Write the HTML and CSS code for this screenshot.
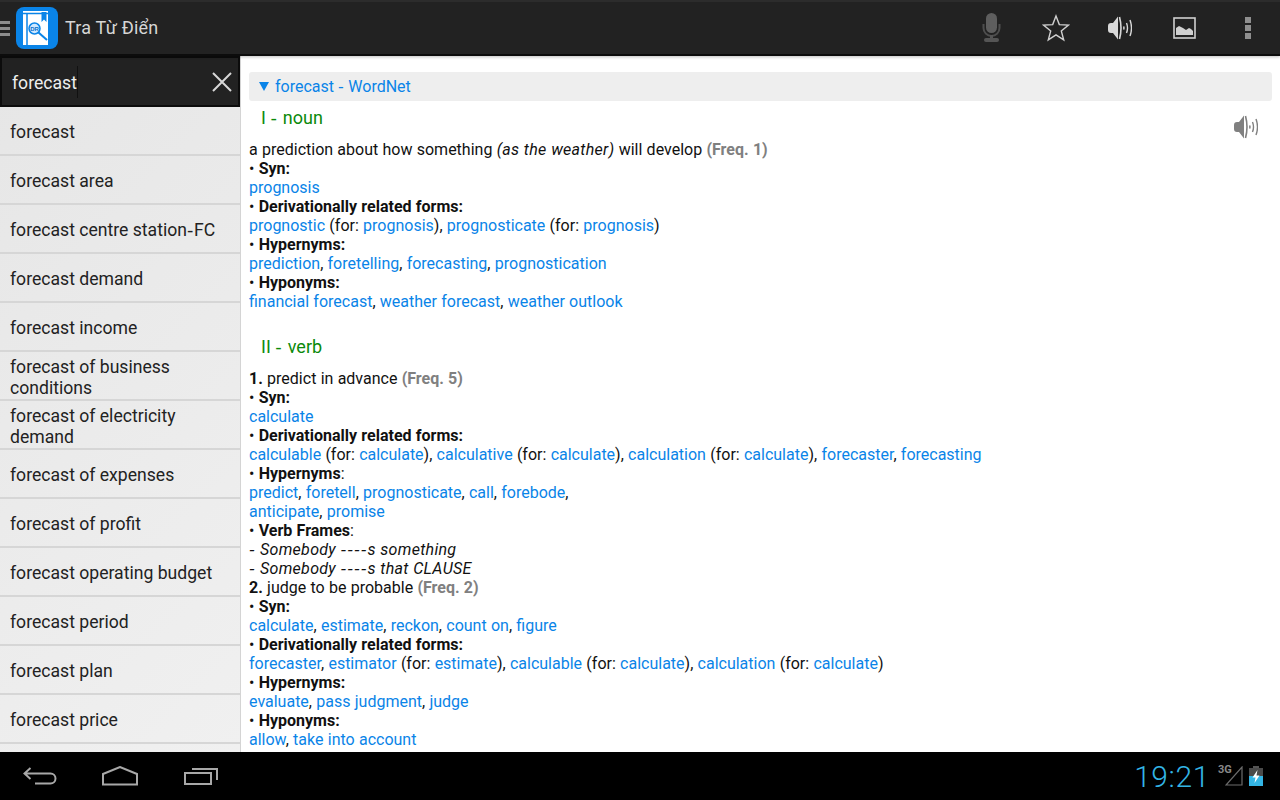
FILE: index.html
```html
<!DOCTYPE html>
<html lang="vi">
<head>
<meta charset="utf-8">
<title>Tra Từ Điển</title>
<link rel="stylesheet" href="styles.css">
</head>
<body>
<div class="app">
  <header class="actionbar">
    <div class="home">
      <div class="drawer"><i></i><i></i><i></i></div>
      <svg class="logo" width="42" height="42" viewBox="0 0 42 42">
        <rect x="0" y="0" width="42" height="42" rx="8" fill="#0a84e8"/>
        <path d="M7 4h25v34H7z" fill="#fff"/>
        <path d="M7 6.500h25M11 7v31" stroke="#0a84e8" stroke-width="1.500" fill="none"/>
        <path d="M25.500 5h5v10l-2.500-2.500-2.500 2.500z" fill="#0a84e8"/>
        <circle cx="18.500" cy="21.500" r="5.500" fill="#cfe8ff" stroke="#0a84e8" stroke-width="1.500"/>
        <text class="logo-mark" x="18.500" y="23.500">DR</text>
        <path d="M22.500 25.500l8.500 7.500" stroke="#0a84e8" stroke-width="2"/>
      </svg>
      <span class="title">Tra Từ Điển</span>
    </div>
    <div class="actions">
      <svg class="act" width="24" height="32" viewBox="0 0 24 32">
        <rect x="7" y="1" width="11" height="20" rx="5.500" fill="#5e5e5e"/>
        <path d="M4.500 12v4a8 8 0 0 0 16 0v-4" fill="none" stroke="#4e4e4e" stroke-width="2"/>
        <rect x="11" y="23" width="3" height="4" fill="#555"/>
        <rect x="5" y="26" width="15" height="4" rx="2" fill="#555"/>
      </svg>
      <svg class="act" width="28" height="28" viewBox="0 0 28 28">
        <path d="M14 2l3.300 8.600 9.200.5-7.200 5.800 2.400 8.900L14 20.800 6.300 25.800l2.400-8.900L1.500 11.100l9.200-.5z" fill="none" stroke="#d0d0d0" stroke-width="1.400"/>
      </svg>
      <svg class="act" width="24" height="24" viewBox="0 0 24 24">
        <use href="#speaker" fill="#d8d8d8" stroke="#d8d8d8"/>
      </svg>
      <svg class="act" width="24" height="24" viewBox="0 0 24 24">
        <rect x="1" y="2" width="21" height="20" fill="none" stroke="#d0d0d0" stroke-width="1.600"/>
        <path d="M3 19v-7l3-2 4 2 3 2 3-2 2 1 2 2v4z" fill="#d0d0d0"/>
      </svg>
      <div class="overflow"><i></i><i></i><i></i></div>
    </div>
  </header>
  <main class="main">
    <aside class="sidebar">
      <div class="search">
        <span class="query">forecast</span>
        <svg width="20" height="20" viewBox="0 0 20 20"><path d="M1 1l18 18M19 1L1 19" stroke="#d8d8d8" stroke-width="2"/></svg>
      </div>
      <ul class="list">
        <li><span>forecast</span></li>
        <li><span>forecast area</span></li>
        <li><span>forecast centre station<span class="dash-list">-</span>FC</span></li>
        <li><span>forecast demand</span></li>
        <li><span>forecast income</span></li>
        <li><span>forecast of business conditions</span></li>
        <li><span>forecast of electricity demand</span></li>
        <li><span>forecast of expenses</span></li>
        <li><span>forecast of profit</span></li>
        <li><span>forecast operating budget</span></li>
        <li><span>forecast period</span></li>
        <li><span>forecast plan</span></li>
        <li><span>forecast price</span></li>
      </ul>
    </aside>
    <article class="content">
      <div class="dict-head"><span class="tri"></span><span>forecast <span class="dash-head">-</span> WordNet</span></div>
      <div class="pos first">I <span class="dash-pos">-</span> noun
        <svg class="say" width="24" height="24" viewBox="0 0 24 24"><use href="#speaker" fill="#808080" stroke="#808080"/></svg>
      </div>
      <div class="body">
        <p>a prediction about how something <em>(as the weather)</em> will develop <b class="freq">(Freq. 1)</b></p>
        <p>• <b>Syn:</b></p>
        <p><a>prognosis</a></p>
        <p>• <b>Derivationally related forms:</b></p>
        <p><a>prognostic</a> (for: <a>prognosis</a>), <a>prognosticate</a> (for: <a>prognosis</a>)</p>
        <p>• <b>Hypernyms:</b></p>
        <p><a>prediction</a>, <a>foretelling</a>, <a>forecasting</a>, <a>prognostication</a></p>
        <p>• <b>Hyponyms:</b></p>
        <p><a>financial forecast</a>, <a>weather forecast</a>, <a>weather outlook</a></p>
      </div>
      <div class="pos second">II <span class="dash-pos">-</span> verb</div>
      <div class="body">
        <p><b>1.</b> predict in advance <b class="freq">(Freq. 5)</b></p>
        <p>• <b>Syn:</b></p>
        <p><a>calculate</a></p>
        <p>• <b>Derivationally related forms:</b></p>
        <p><a>calculable</a> (for: <a>calculate</a>), <a>calculative</a> (for: <a>calculate</a>), <a>calculation</a> (for: <a>calculate</a>), <a>forecaster</a>, <a>forecasting</a></p>
        <p>• <b>Hypernyms</b>:</p>
        <p><a>predict</a>, <a>foretell</a>, <a>prognosticate</a>, <a>call</a>, <a>forebode</a>,</p>
        <p><a>anticipate</a>, <a>promise</a></p>
        <p>• <b>Verb Frames</b>:</p>
        <p><span class="dash">-</span> <em>Somebody <span class="dash">----</span>s something</em></p>
        <p><span class="dash">-</span> <em>Somebody <span class="dash">----</span>s that CLAUSE</em></p>
        <p><b>2.</b> judge to be probable <b class="freq">(Freq. 2)</b></p>
        <p>• <b>Syn:</b></p>
        <p><a>calculate</a>, <a>estimate</a>, <a>reckon</a>, <a>count on</a>, <a>figure</a></p>
        <p>• <b>Derivationally related forms:</b></p>
        <p><a>forecaster</a>, <a>estimator</a> (for: <a>estimate</a>), <a>calculable</a> (for: <a>calculate</a>), <a>calculation</a> (for: <a>calculate</a>)</p>
        <p>• <b>Hypernyms:</b></p>
        <p><a>evaluate</a>, <a>pass judgment</a>, <a>judge</a></p>
        <p>• <b>Hyponyms:</b></p>
        <p><a>allow</a>, <a>take into account</a></p>
        <p>• <b>Verb Frames</b>:</p>
      </div>
    </article>
  </main>
  <footer class="navbar">
    <div class="softkeys">
      <svg width="34" height="20" viewBox="0 0 34 20"><path d="M7.500 2L1.500 7.500 7.500 13M2.500 7.500h25a5 5 0 0 1 0 10H12" fill="none" stroke="#a8a8a8" stroke-width="2"/></svg>
      <svg width="36" height="20" viewBox="0 0 36 20"><path d="M1 8L18 1l17 7v10.500H1z" fill="none" stroke="#a8a8a8" stroke-width="2"/></svg>
      <svg width="35" height="20" viewBox="0 0 35 20"><rect x="2" y="7" width="26" height="11" fill="none" stroke="#a8a8a8" stroke-width="2"/><path d="M9 3h25v11" fill="none" stroke="#a8a8a8" stroke-width="2"/></svg>
    </div>
    <div class="status">
      <span class="clock">19:21</span>
      <div class="signal">
        <span class="net">3G</span>
        <svg width="18" height="20" viewBox="0 0 18 20"><path d="M17 1v18H1z" fill="none" stroke="#6c6c6c" stroke-width="1.200"/></svg>
      </div>
      <svg class="battery" width="14" height="20" viewBox="0 0 14 20">
        <rect x="4" y="0" width="6" height="2" fill="#555"/>
        <rect x="0" y="2" width="14" height="18" fill="#4a4a4a"/>
        <rect x="0" y="10" width="14" height="10" fill="#33b5e5"/>
        <path d="M8.500 4L3.500 11.500h3L5.500 17l5-7.500h-3z" fill="#fff"/>
      </svg>
    </div>
  </footer>
</div>
<svg class="defs" width="0" height="0">
  <symbol id="speaker" viewBox="0 0 24 24">
    <path d="M0 10Q0 7 3 7H5L10 .5V23.500L5 17H3Q0 17 0 14z" stroke="none"/>
    <path d="M11.500 1Q14.500 12 11.500 23" fill="none" stroke-width="1.600"/>
    <path d="M15.500 10.500q1 1.500 0 3M18.500 7q2 5 0 10M22 4q3 8 0 16" fill="none" stroke-width="1.400"/>
  </symbol>
</svg>
</body>
</html>
```
FILE: styles.css
```css
* { box-sizing: border-box; }
html, body { margin: 0; height: 100%; overflow: hidden; }
body { font-family: Roboto, "Noto Sans", sans-serif; font-size: 16px; color: #111; background: #fff; }
.app { width: 1280px; height: 800px; display: flex; flex-direction: column; overflow: hidden; }

.actionbar { height: 56px; flex: none; display: flex; justify-content: space-between; align-items: center; background: #222; border-top: 2px solid #2c2c2c; border-bottom: 2px solid #0c0c0c; box-shadow: 0 1px 3px rgba(0,0,0,.25); position: relative; z-index: 2; }
.home { display: flex; align-items: center; height: 100%; }
.drawer { width: 16px; display: flex; flex-direction: column; gap: 3px; }
.drawer i { display: block; width: 10px; height: 3px; background: #8c8c8c; }
.logo { display: block; }
.logo-mark { font-family: "Liberation Sans", sans-serif; font-size: 6px; font-weight: 700; fill: #0a6fc8; text-anchor: middle; }
.title { margin-left: 7px; padding-bottom: 2px; font-size: 18px; color: #d6d6d6; letter-spacing: .2px; }
.actions { display: flex; align-items: center; height: 100%; padding-right: 29px; }
.act { display: block; flex: none; }
.actions .act:nth-child(1) { margin-right: 39px; }
.actions .act:nth-child(2) { margin-right: 38px; }
.actions .act:nth-child(3) { margin-right: 41px; }
.actions .act:nth-child(4) { margin-right: 48px; }
.overflow { display: flex; flex-direction: column; gap: 2px; }
.overflow i { display: block; width: 6px; height: 6px; background: #8f8f8f; }

.main { flex: 1; min-height: 0; display: flex; overflow: hidden; }
.sidebar { width: 241px; flex: none; background: linear-gradient(135deg, #e6e6e6, #f0f0f0); border-right: 1px solid #d4d4d4; overflow: hidden; }
.search { height: 51px; background: #222; border: 2px solid #0c0c0c; display: flex; align-items: center; justify-content: space-between; padding: 0 6px 0 10px; }
.query { color: #eee; font-size: 17.6px; border-right: 1px solid #111; line-height: 30px; padding-top: 2px; }
.list { list-style: none; margin: 0; padding: 0; }
.list li { height: 49px; display: flex; align-items: center; padding: 4px 10px 0; border-bottom: 2px solid #d6d6d6; font-size: 17.6px; line-height: 21px; color: #222; }
.dash-list { font-family: "DejaVu Sans", sans-serif; letter-spacing: .8px; }

.content { flex: 1; min-width: 0; padding: 16px 8px 0 8px; overflow: hidden; line-height: 19px; }
.dict-head { height: 29px; background: #eee; border-radius: 3px; color: #0a84e8; font-size: 16px; line-height: 29px; padding-left: 10px; display: flex; align-items: center; }
.tri { width: 0; height: 0; border-left: 5px solid transparent; border-right: 5px solid transparent; border-top: 9px solid #0a84e8; margin-right: 6px; }
.dash-head { font-family: "DejaVu Sans", sans-serif; letter-spacing: .6px; }
.pos { color: #0a8a0a; font-size: 18px; padding-left: 12px; line-height: 24px; position: relative; }
.dash-pos { font-family: "DejaVu Sans", sans-serif; letter-spacing: 1.500px; }
.pos.first { margin-top: 5px; margin-bottom: 10px; }
.pos.second { margin-top: 24px; margin-bottom: 10px; }
.say { position: absolute; right: 14px; top: 9px; }
.body p { margin: 0; height: 19px; white-space: nowrap; word-spacing: .3px; }
.body em { letter-spacing: .3px; }
.body a { color: #0a84e8; }
.dash { font-family: "DejaVu Sans", sans-serif; font-style: italic; letter-spacing: .95px; }
.freq { color: #808080; }

.navbar { height: 48px; flex: none; background: #000; display: flex; justify-content: space-between; align-items: center; position: relative; z-index: 2; }
.softkeys { display: flex; align-items: center; padding-left: 23px; gap: 45px; }
.status { display: flex; align-items: center; padding-right: 17px; }
.clock { font-size: 30px; font-weight: 300; color: #33b5e5; letter-spacing: .6px; }
.signal { position: relative; margin-left: 8px; width: 25px; height: 20px; }
.signal svg { position: absolute; right: 0; bottom: 0; }
.net { position: absolute; left: 0; top: -1px; font-size: 11px; line-height: 10px; font-weight: 700; color: #888; }
.battery { margin-left: 6px; display: block; }
.defs { position: absolute; }
```
